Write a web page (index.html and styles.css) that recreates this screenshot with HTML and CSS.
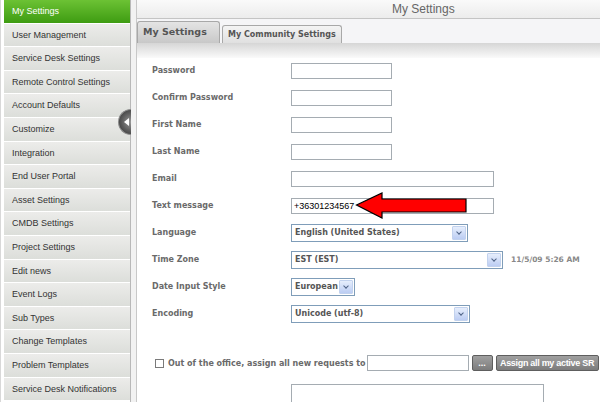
FILE: index.html
```html
<!DOCTYPE html>
<html lang="en">
<head>
    <meta charset="UTF-8">
    <title>My Settings</title>
    <link rel="stylesheet" href="styles.css">
</head>
<body>
    <div class="page">
        <div class="sidebar">
            <div class="nav-item active">My Settings</div>
            <div class="nav-item">User Management</div>
            <div class="nav-item">Service Desk Settings</div>
            <div class="nav-item">Remote Control Settings</div>
            <div class="nav-item">Account Defaults</div>
            <div class="nav-item">Customize</div>
            <div class="nav-item">Integration</div>
            <div class="nav-item">End User Portal</div>
            <div class="nav-item">Asset Settings</div>
            <div class="nav-item">CMDB Settings</div>
            <div class="nav-item">Project Settings</div>
            <div class="nav-item">Edit news</div>
            <div class="nav-item">Event Logs</div>
            <div class="nav-item">Sub Types</div>
            <div class="nav-item">Change Templates</div>
            <div class="nav-item">Problem Templates</div>
            <div class="nav-item">Service Desk Notifications</div>
            <div class="collapse"><span class="collapse-arrow"></span></div>
        </div>
        <div class="gutter"></div>
        <div class="main">
            <div class="header">My Settings</div>
            <div class="tabs">
                <div class="tab tab-active">My Settings</div>
                <div class="tab">My Community Settings</div>
            </div>
            <div class="band"></div>
            <div class="form">
                <div class="row">
                    <div class="label">Password</div>
                    <div class="input short"></div>
                </div>
                <div class="row">
                    <div class="label">Confirm Password</div>
                    <div class="input short"></div>
                </div>
                <div class="row">
                    <div class="label">First Name</div>
                    <div class="input short"></div>
                </div>
                <div class="row">
                    <div class="label">Last Name</div>
                    <div class="input short"></div>
                </div>
                <div class="row">
                    <div class="label">Email</div>
                    <div class="input long"></div>
                </div>
                <div class="row">
                    <div class="label">Text message</div>
                    <div class="field">
                        <div class="input long value">+36301234567</div>
                        <svg class="arrow" width="114" height="30" viewBox="0 0 114 30">
                            <polygon points="1.5,14 27,2 27,8 111,8 111,21 27,21 27,27" fill="#ff0000" stroke="#000" stroke-width="1.2"/>
                        </svg>
                    </div>
                </div>
                <div class="row">
                    <div class="label">Language</div>
                    <div class="select lang"><span>English (United States)</span><span class="drop"></span></div>
                </div>
                <div class="row">
                    <div class="label">Time Zone</div>
                    <div class="select tz"><span>EST (EST)</span><span class="drop"></span></div>
                    <div class="clock">11/5/09 5:26 AM</div>
                </div>
                <div class="row">
                    <div class="label">Date Input Style</div>
                    <div class="select date"><span>European</span><span class="drop"></span></div>
                </div>
                <div class="row">
                    <div class="label">Encoding</div>
                    <div class="select enc"><span>Unicode (utf-8)</span><span class="drop"></span></div>
                </div>
                <div class="office">
                    <span class="checkbox"></span>
                    <span class="office-text">Out of the office, assign all new requests to</span>
                    <div class="input office-input"></div>
                    <button class="btn dots">...</button>
                    <button class="btn assign">Assign all my active SR</button>
                </div>
                <div class="notes-row">
                    <div class="notes"></div>
                </div>
            </div>
        </div>
    </div>
</body>
</html>
```

FILE: styles.css
```css
* {
    margin: 0;
    padding: 0;
    box-sizing: border-box;
}

body {
    width: 600px;
    height: 402px;
    overflow: hidden;
    background: #fff;
    font-family: 'Liberation Sans', Arial, sans-serif;
}

.page {
    display: flex;
    height: 402px;
}

/* left menu */
.sidebar {
    position: relative;
    flex-shrink: 0;
    width: 131px;
    padding-left: 3px;
    border-left: 1px solid #d8d8d8;
    border-right: 1px solid #b8b8b8;
    background: #fff;
}

.nav-item {
    height: 23.6px;
    line-height: 23px;
    padding-left: 8px;
    border-bottom: 1px solid #fff;
    font-size: 9px;
    color: #333;
    white-space: nowrap;
    background: linear-gradient(#ececea, #dcdeda);
}

.nav-item.active {
    color: #fff;
    background: linear-gradient(#6cc234, #3e9c12);
}

.collapse {
    position: absolute;
    right: -1px;
    top: 109px;
    width: 13px;
    height: 26px;
    border-radius: 13px 0 0 13px;
    background: radial-gradient(circle at 100% 50%, #9a9a9a 0, #5a5a5a 55%, #2e2e2e 100%);
    border: 1px solid #888;
    border-right: none;
}

.collapse-arrow {
    position: absolute;
    left: 5px;
    top: 8px;
    width: 0;
    height: 0;
    border-top: 4px solid transparent;
    border-bottom: 4px solid transparent;
    border-right: 5px solid #fff;
}

.gutter {
    flex-shrink: 0;
    width: 5px;
    background: #f2f2f2;
}

/* main panel */
.main {
    flex: 1;
    min-width: 0;
    overflow: hidden;
    border-left: 1px solid #c8c8c8;
}

.header {
    height: 19px;
    line-height: 18px;
    padding-left: 255px;
    font-size: 12px;
    color: #666;
    background: linear-gradient(#fafafa, #ececec);
    border-bottom: 1px solid #c4c4c4;
}

.tabs {
    display: flex;
    align-items: flex-end;
    gap: 2px;
    height: 24px;
    background: #f5f5f7;
}

.tab {
    height: 18px;
    line-height: 17px;
    padding: 0 5px;
    font-family: 'DejaVu Sans', Verdana, sans-serif;
    font-size: 8px;
    font-weight: bold;
    color: #555;
    border: 1px solid #a8a8a8;
    border-bottom: none;
    border-radius: 3px 3px 0 0;
    background: linear-gradient(#f4f4f4, #e0e0e0);
}

.tab-active {
    width: 83px;
    height: 22px;
    line-height: 19px;
    font-size: 9.5px;
    background: linear-gradient(#e4e4e4, #c8c8c8);
}

.band {
    height: 15px;
    background: linear-gradient(#d6d6d6, #fafafa);
}

.form {
    padding: 0 0 0 15px;
}

.row {
    display: flex;
    align-items: center;
    height: 27px;
}

.row:first-child {
    margin-top: -1px;
}

.label {
    width: 139px;
    font-family: 'DejaVu Sans', Verdana, sans-serif;
    font-size: 8px;
    font-weight: bold;
    color: #6a6a6a;
}

.input {
    height: 16px;
    border: 1px solid #a5acb2;
    background: #fff;
}

.short {
    width: 101px;
}

.long {
    width: 203px;
}

.field {
    position: relative;
}

.value {
    font-size: 9px;
    line-height: 14px;
    padding-left: 2px;
    color: #000;
}

.arrow {
    position: absolute;
    left: 64px;
    top: -7px;
}

.select {
    display: flex;
    align-items: center;
    justify-content: space-between;
    height: 18px;
    border: 1px solid #7f9db9;
    background: #fff;
    padding: 0 1px 0 3px;
    font-family: 'DejaVu Sans', Verdana, sans-serif;
    font-size: 8px;
    font-weight: bold;
    color: #555;
}

.drop {
    position: relative;
    width: 14px;
    height: 14px;
    border: 1px solid #c2d2ee;
    border-radius: 1px;
    background: linear-gradient(#e6eefc, #bccdf3);
}

.drop::after {
    content: '';
    position: absolute;
    left: 4px;
    top: 3px;
    width: 3px;
    height: 3px;
    border-right: 1.5px solid #4d6185;
    border-bottom: 1.5px solid #4d6185;
    transform: rotate(45deg);
}

.lang {
    width: 177px;
}

.tz {
    width: 212px;
}

.date {
    width: 64px;
}

.enc {
    width: 179px;
}

.clock {
    margin-left: 8px;
    font-family: 'DejaVu Sans', Verdana, sans-serif;
    font-size: 7.5px;
    font-weight: bold;
    color: #888;
}

.office {
    display: flex;
    align-items: center;
    margin-top: 26px;
    height: 20px;
    padding-left: 3px;
    white-space: nowrap;
}

.checkbox {
    width: 9px;
    height: 9px;
    border: 1px solid #7a7a7a;
    background: #fff;
    margin-right: 4px;
}

.office-text {
    font-family: 'DejaVu Sans', Verdana, sans-serif;
    font-size: 8px;
    font-weight: bold;
    color: #6a6a6a;
    margin-right: 1px;
}

.office-input {
    flex-shrink: 0;
    width: 102px;
}

.btn {
    flex-shrink: 0;
    height: 16px;
    margin-left: 3px;
    padding: 0 3px;
    border: 1px solid #5e5e5e;
    border-radius: 2px;
    background: linear-gradient(#a0a0a0, #7c7c7c);
    color: #fff;
    font-family: 'Liberation Sans', Arial, sans-serif;
    font-size: 9px;
    font-weight: bold;
    white-space: nowrap;
}

.dots {
    width: 21px;
}

.assign {
    width: 103px;
    letter-spacing: -0.3px;
}

.notes-row {
    padding-left: 139px;
    margin-top: 11px;
}

.notes {
    width: 253px;
    height: 40px;
    border: 1px solid #a5acb2;
}
```
